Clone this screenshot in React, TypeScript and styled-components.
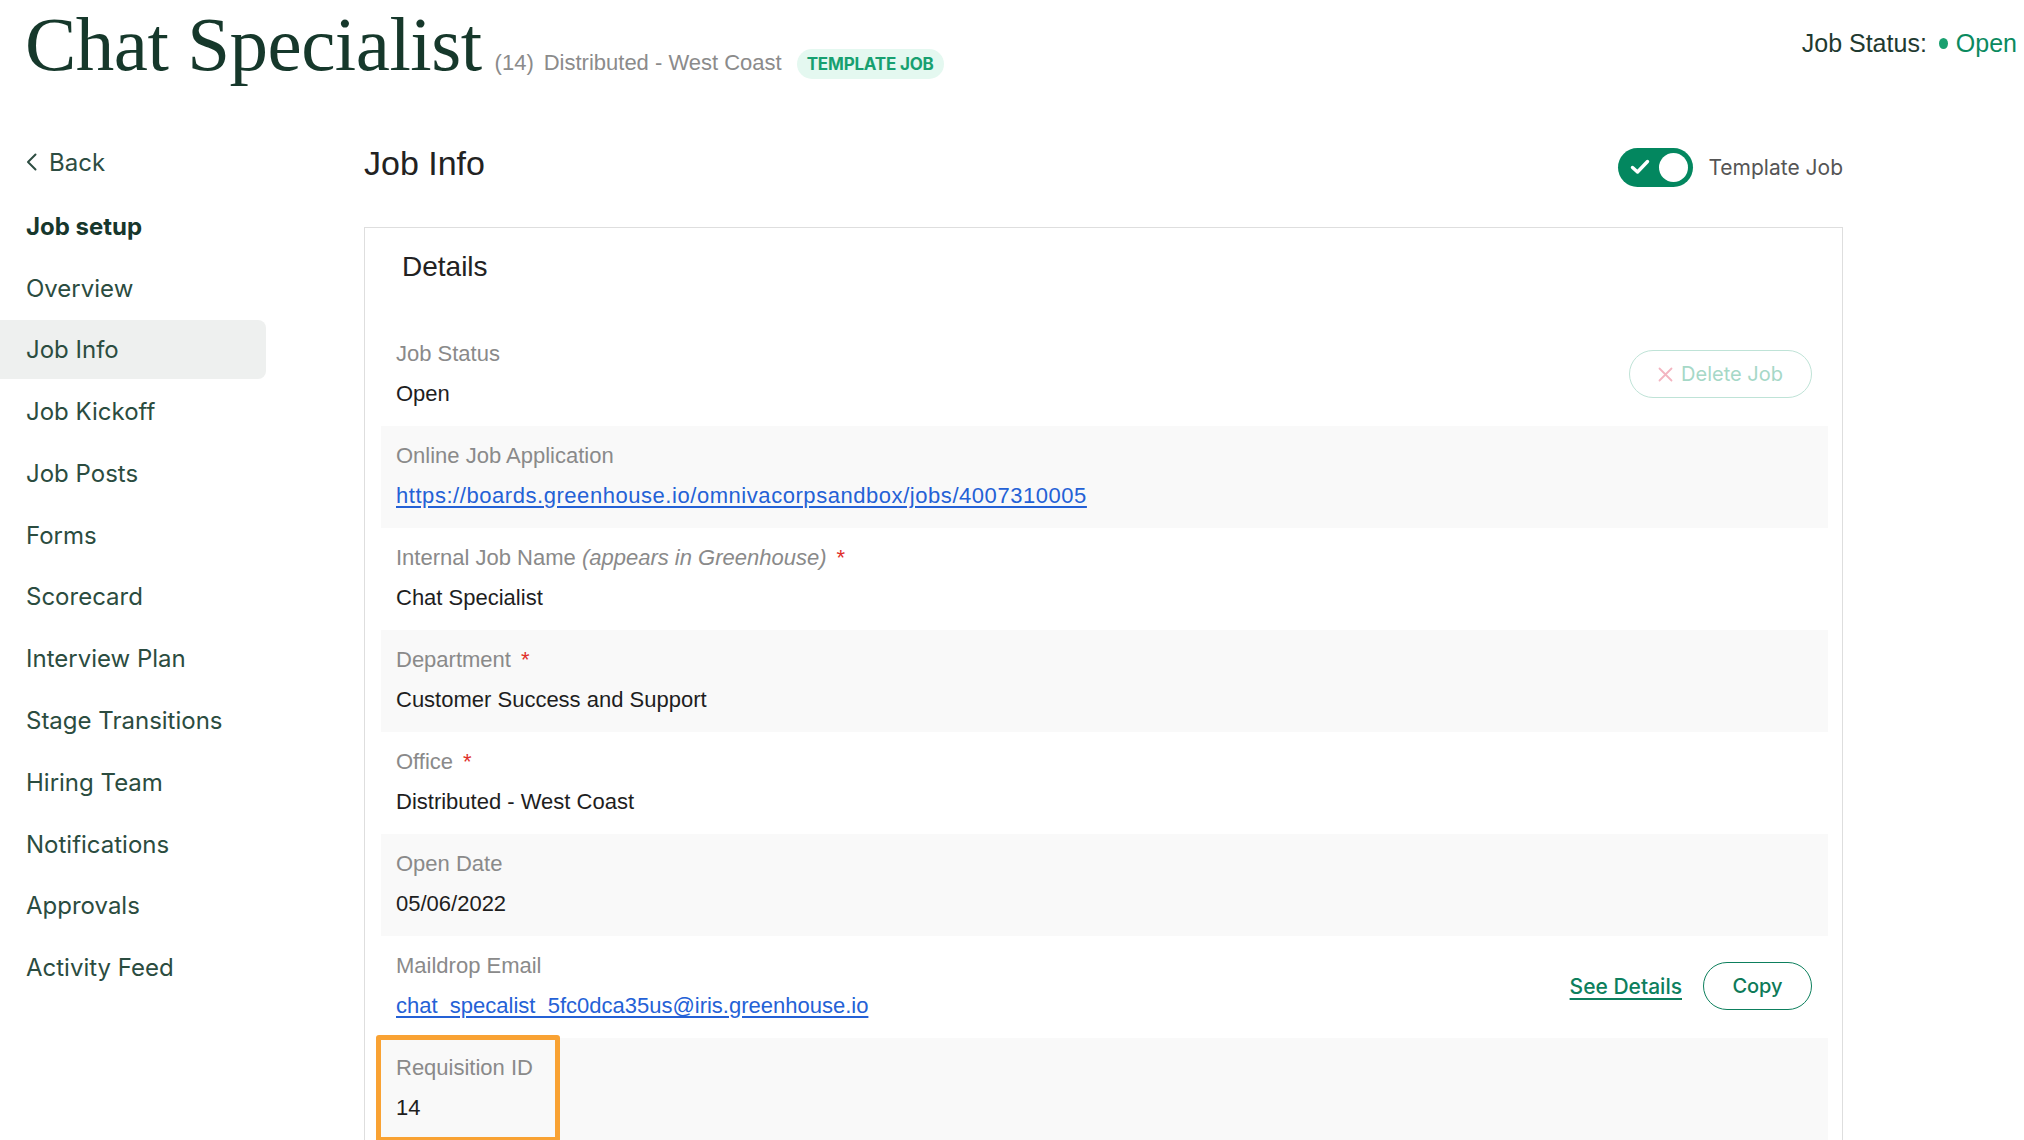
import React from "react";
import styled, { createGlobalStyle } from "styled-components";

const GlobalStyle = createGlobalStyle`
  html, body {
    margin: 0;
    padding: 0;
    background: #ffffff;
    overflow: hidden;
  }
  body {
    font-family: "Liberation Sans", Arial, sans-serif;
  }
  * {
    box-sizing: border-box;
  }
`;

const Page = styled.div`
  width: 2024px;
  height: 1140px;
  overflow: hidden;
`;

const Header = styled.header`
  display: flex;
  justify-content: space-between;
  align-items: flex-start;
  height: 130px;
  padding: 6px 7px 0 25px;
`;

const TitleGroup = styled.div`
  display: flex;
  align-items: baseline;
`;

const Title = styled.h1`
  margin: 0;
  font-family: "Liberation Serif", "Times New Roman", serif;
  font-weight: 400;
  font-size: 77px;
  line-height: 1;
  letter-spacing: -0.5px;
  color: #16382b;
`;

const Meta = styled.span<{ $gap: number }>`
  margin-left: ${(p) => p.$gap}px;
  font-size: 22px;
  color: #8b8b8b;
`;

const Badge = styled.span`
  margin-left: 15px;
  padding: 0 10px;
  height: 30px;
  line-height: 30px;
  border-radius: 15px;
  background: #e4f8f0;
  color: #17a070;
  font-family: Inter, "Liberation Sans", sans-serif;
  font-weight: 700;
  font-size: 17px;
  letter-spacing: -0.2px;
`;

const Status = styled.div`
  margin-top: 22px;
  display: flex;
  align-items: center;
  font-size: 25px;
  line-height: 30px;
  color: #1f3a30;
`;

const StatusDot = styled.span`
  width: 9px;
  height: 11px;
  border-radius: 50%;
  background: #19a06f;
  margin: 0 8px 0 12px;
`;

const StatusValue = styled.span`
  color: #0b8a5f;
`;

const Body = styled.div`
  display: grid;
  grid-template-columns: 266px 1479px;
  column-gap: 98px;
`;

const Sidebar = styled.nav`
  display: flex;
  flex-direction: column;
  font-family: Inter, "Liberation Sans", sans-serif;
`;

const BackLink = styled.a`
  display: flex;
  align-items: center;
  gap: 12px;
  height: 64px;
  padding-left: 26px;
  font-size: 24px;
  color: #2d4d42;
`;

const SectionTitle = styled.div`
  margin-top: 3px;
  height: 60px;
  line-height: 60px;
  padding-left: 26px;
  font-size: 24px;
  font-weight: 700;
  color: #17372c;
`;

const NavList = styled.div`
  margin-top: 1.5px;
  display: flex;
  flex-direction: column;
  gap: 2.8px;
`;

const NavItem = styled.a<{ $active?: boolean }>`
  display: flex;
  align-items: center;
  height: 59px;
  padding-left: 26px;
  border-radius: 0 8px 8px 0;
  font-size: 24px;
  color: #2b4c40;
  background: ${(p) => (p.$active ? "#eef0ef" : "transparent")};
`;

const Main = styled.main`
  display: flex;
  flex-direction: column;
`;

const TitleRow = styled.div`
  display: flex;
  justify-content: space-between;
  align-items: center;
  height: 66px;
`;

const PageTitle = styled.h2`
  margin: 0;
  font-size: 34px;
  font-weight: 400;
  color: #222222;
`;

const ToggleGroup = styled.div`
  display: flex;
  align-items: center;
  gap: 15px;
  padding-top: 8px;
`;

const Toggle = styled.div`
  width: 75px;
  height: 39px;
  border-radius: 20px;
  background: #03875f;
  display: flex;
  align-items: center;
  justify-content: space-between;
  padding: 0 5px 0 12px;
`;

const Knob = styled.span`
  width: 29px;
  height: 29px;
  border-radius: 50%;
  background: #ffffff;
`;

const ToggleLabel = styled.span`
  font-family: Inter, "Liberation Sans", sans-serif;
  font-size: 21px;
  color: #555555;
`;

const Card = styled.section`
  position: relative;
  margin-top: 31px;
  border: 1px solid #dedede;
  padding: 22px 14px 40px 16px;
`;

const CardTitle = styled.h3`
  margin: 0 0 40px;
  padding-left: 21px;
  font-size: 28px;
  line-height: 34px;
  font-weight: 400;
  color: #222222;
`;

const Row = styled.div<{ $shaded?: boolean }>`
  position: relative;
  display: flex;
  justify-content: space-between;
  align-items: center;
  padding: 16px 16px 18px 15px;
  background: ${(p) => (p.$shaded ? "#f9f9f9" : "#ffffff")};
`;

const Field = styled.div`
  display: flex;
  flex-direction: column;
`;

const Label = styled.div`
  font-size: 22px;
  line-height: 28px;
  color: #8a8a8a;
`;

const Required = styled.span`
  margin-left: 10px;
  color: #e0302b;
`;

const Value = styled.div`
  margin-top: 12px;
  font-size: 22px;
  line-height: 28px;
  color: #1e1e1e;
`;

const Link = styled.a<{ $spacing?: number }>`
  color: #2461d6;
  text-decoration: underline;
  text-underline-offset: 3px;
  letter-spacing: ${(p) => p.$spacing ?? 0}px;
`;

const Actions = styled.div`
  display: flex;
  align-items: center;
  gap: 21px;
`;

const PillButton = styled.button<{ $muted?: boolean; $width: number }>`
  display: flex;
  align-items: center;
  justify-content: center;
  gap: 8px;
  width: ${(p) => p.$width}px;
  height: 48px;
  border-radius: 24px;
  background: #ffffff;
  border: ${(p) => (p.$muted ? "1px solid #bfe3d7" : "1.5px solid #0d7f5d")};
  color: ${(p) => (p.$muted ? "#a6d8c7" : "#0d7a58")};
  font-family: Inter, "Liberation Sans", sans-serif;
  font-size: 20px;
  font-weight: ${(p) => (p.$muted ? 400 : 500)};
  cursor: pointer;
`;

const TextLink = styled.a`
  font-family: Inter, "Liberation Sans", sans-serif;
  font-size: 21px;
  font-weight: 500;
  color: #0d7f5d;
  text-decoration: underline;
  text-underline-offset: 4px;
`;

const Highlight = styled.div`
  position: absolute;
  left: -5px;
  top: -3px;
  width: 184px;
  height: 107px;
  border: 5px solid #f9a233;
  border-radius: 3px;
  pointer-events: none;
`;

const BottomShade = styled.div`
  position: absolute;
  left: 20px;
  bottom: 0;
  width: 820px;
  height: 26px;
  background: radial-gradient(ellipse at 30% 100%, rgba(0, 0, 0, 0.05), rgba(0, 0, 0, 0) 70%);
  pointer-events: none;
`;

const navItems = [
  "Overview",
  "Job Info",
  "Job Kickoff",
  "Job Posts",
  "Forms",
  "Scorecard",
  "Interview Plan",
  "Stage Transitions",
  "Hiring Team",
  "Notifications",
  "Approvals",
  "Activity Feed",
];

function App() {
  return (
    <Page>
      <GlobalStyle />
      <Header>
        <TitleGroup>
          <Title>Chat Specialist</Title>
          <Meta $gap={13}>(14)</Meta>
          <Meta $gap={10}>Distributed - West Coast</Meta>
          <Badge>TEMPLATE JOB</Badge>
        </TitleGroup>
        <Status>
          Job Status:
          <StatusDot />
          <StatusValue>Open</StatusValue>
        </Status>
      </Header>

      <Body>
        <Sidebar>
          <BackLink>
            <svg width="11" height="18" viewBox="0 0 11 18" fill="none">
              <path d="M9.5 1.5 L2 9 L9.5 16.5" stroke="#2d4d42" strokeWidth="2" strokeLinecap="round" strokeLinejoin="round" />
            </svg>
            Back
          </BackLink>
          <SectionTitle>Job setup</SectionTitle>
          <NavList>
            {navItems.map((item) => (
              <NavItem key={item} $active={item === "Job Info"}>
                {item}
              </NavItem>
            ))}
          </NavList>
        </Sidebar>

        <Main>
          <TitleRow>
            <PageTitle>Job Info</PageTitle>
            <ToggleGroup>
              <Toggle>
                <svg width="20" height="16" viewBox="0 0 20 16" fill="none">
                  <path d="M2.5 8.5 L7.5 13 L17.5 2.5" stroke="#ffffff" strokeWidth="3.4" strokeLinecap="round" strokeLinejoin="round" />
                </svg>
                <Knob />
              </Toggle>
              <ToggleLabel>Template Job</ToggleLabel>
            </ToggleGroup>
          </TitleRow>

          <Card>
            <CardTitle>Details</CardTitle>

            <Row>
              <Field>
                <Label>Job Status</Label>
                <Value>Open</Value>
              </Field>
              <PillButton $muted $width={183}>
                <svg width="15" height="15" viewBox="0 0 15 15" fill="none">
                  <path d="M1.5 1.5 L13.5 13.5 M13.5 1.5 L1.5 13.5" stroke="#f3b5c1" strokeWidth="1.8" strokeLinecap="round" />
                </svg>
                Delete Job
              </PillButton>
            </Row>

            <Row $shaded>
              <Field>
                <Label>Online Job Application</Label>
                <Value>
                  <Link $spacing={0.55}>https://boards.greenhouse.io/omnivacorpsandbox/jobs/4007310005</Link>
                </Value>
              </Field>
            </Row>

            <Row>
              <Field>
                <Label>
                  Internal Job Name <i>(appears in Greenhouse)</i>
                  <Required>*</Required>
                </Label>
                <Value>Chat Specialist</Value>
              </Field>
            </Row>

            <Row $shaded>
              <Field>
                <Label>
                  Department<Required>*</Required>
                </Label>
                <Value>Customer Success and Support</Value>
              </Field>
            </Row>

            <Row>
              <Field>
                <Label>
                  Office<Required>*</Required>
                </Label>
                <Value>Distributed - West Coast</Value>
              </Field>
            </Row>

            <Row $shaded>
              <Field>
                <Label>Open Date</Label>
                <Value>05/06/2022</Value>
              </Field>
            </Row>

            <Row>
              <Field>
                <Label>Maildrop Email</Label>
                <Value>
                  <Link>chat_specalist_5fc0dca35us@iris.greenhouse.io</Link>
                </Value>
              </Field>
              <Actions>
                <TextLink>See Details</TextLink>
                <PillButton $width={109}>Copy</PillButton>
              </Actions>
            </Row>

            <Row $shaded>
              <Field>
                <Label>Requisition ID</Label>
                <Value>14</Value>
              </Field>
              <Highlight />
            </Row>
            <BottomShade />
          </Card>
        </Main>
      </Body>
    </Page>
  );
}

export default App;
